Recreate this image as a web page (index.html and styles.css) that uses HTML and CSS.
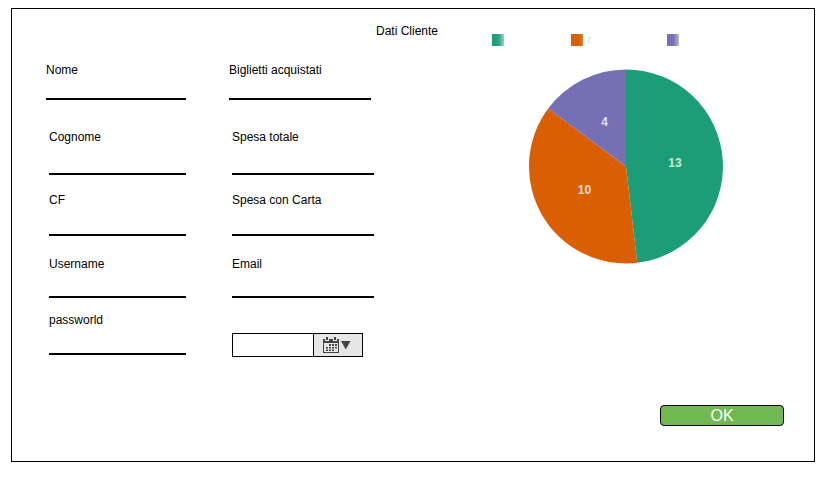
FILE: index.html
```html
<!DOCTYPE html>
<html lang="it">
<head>
<meta charset="utf-8">
<title>Dati Cliente</title>
<link rel="stylesheet" href="styles.css">
</head>
<body>
<main class="frame">
  <header class="header">
    <h1 class="title">Dati Cliente</h1>
    <div class="legend">
      <span class="swatch swatch-green"></span>
      <span class="swatch swatch-orange"></span>
      <span class="legend-text">r</span>
      <span class="swatch swatch-purple"></span>
    </div>
  </header>
  <div class="content">
    <section class="column">
      <div class="field field-first">Nome</div>
      <div class="field field-second">Cognome</div>
      <div class="field field-third">CF</div>
      <div class="field field-fourth">Username</div>
      <div class="field field-fifth">passworld</div>
    </section>
    <section class="column column-wide">
      <div class="field field-first">Biglietti acquistati</div>
      <div class="field field-second">Spesa totale</div>
      <div class="field field-third">Spesa con Carta</div>
      <div class="field field-fourth">Email</div>
      <div class="date">
        <div class="date-value"></div>
        <div class="date-button">
          <svg width="28" height="17" viewBox="0 0 28 17" fill="#444">
            <path fill-rule="evenodd" d="M0 2h2v2h3V2h5v2h3V2h3v14H0zM1 5.5v9.5h14V5.5z"/>
            <path d="M1 2h14v4H1z"/>
            <path fill="#e6e6e6" d="M2 0h4v4H2zM10 0h4v4h-4z"/>
            <path d="M3 0h2v3H3zM11 0h2v3h-2z"/>
            <path d="M6 7h2v2H6zM9 7h2v2H9zM12 7h2v2h-2zM3 10h2v1.500H3zM6 10h2v1.500H6zM9 10h2v1.500H9zM12 10h2v1.500h-2zM3 12.500h2V14H3zM6 12.500h2V14H6zM9 12.500h2V14H9z"/>
            <path d="M18 4h9.500l-4.750 8.500z"/>
          </svg>
        </div>
      </div>
    </section>
    <svg class="pie" width="194" height="195" viewBox="0 0 194 195">
      <path fill="#1b9e77" d="M97 97.400V.4A97 97 0 0 1 108.260 193.740z"/>
      <path fill="#d95f02" d="M97 97.400L108.260 193.740A97 97 0 0 1 19.200 39.470z"/>
      <path fill="#7570b3" d="M97 97.400L19.200 39.470A97 97 0 0 1 97 .4z"/>
      <g class="pie-labels">
        <text x="146" y="98">13</text>
        <text x="55.500" y="125">10</text>
        <text x="75.500" y="57">4</text>
      </g>
    </svg>
  </div>
  <footer class="footer"><button class="ok">OK</button></footer>
</main>
</body>
</html>
```
FILE: styles.css
```css
* { box-sizing: border-box; }
body {
  margin: 0;
  padding: 8px 0 0 11px;
  background: #fff;
  color: #000;
  font: 12px/14px "Liberation Sans", Arial, sans-serif;
}
.frame {
  width: 804px;
  height: 454px;
  border: 1px solid #000;
}
.header {
  display: flex;
  height: 54px;
  padding: 15px 0 0 364px;
}
.title {
  width: 116px;
  margin: 0;
  font-size: 12px;
  font-weight: normal;
}
.legend { display: flex; padding-top: 10px; }
.swatch { width: 12px; height: 12px; }
.swatch-green {
  margin-right: 67px;
  background: linear-gradient(90deg, #1fa07b 35%, #35a987 60%, #9bd3c2);
}
.swatch-orange { background: linear-gradient(90deg, #d95f02 65%, #e27a2b); }
.swatch-purple { background: linear-gradient(90deg, #7772b4 50%, #8c88c1 70%, #bdbbdc); }
.legend-text {
  width: 84px;
  padding-left: 4px;
  line-height: 13px;
  color: #dedeea;
}
.content {
  display: flex;
  height: 333px;
  padding-left: 34px;
}
.column { width: 140px; margin-right: 43px; }
.column-wide { width: 145px; margin-right: 155px; }
.field {
  margin-left: 3px;
  border-bottom: 2px solid #000;
}
.field-first { height: 37px; margin-left: 0; }
.column-wide .field-first { margin-right: 3px; }
.field-second { height: 45px; margin-top: 30px; }
.field-third { height: 43px; margin-top: 18px; }
.field-fourth { height: 41px; margin-top: 21px; }
.field-fifth { height: 42px; margin-top: 15px; }
.date {
  display: flex;
  width: 131px;
  height: 24px;
  margin: 35px 0 0 3px;
  border: 1px solid #000;
}
.date-value { width: 81px; border-right: 1px solid #000; }
.date-button {
  flex: 1;
  padding: 3px 0 0 9px;
  background: #e6e6e6;
}
.date-button svg { display: block; }
.pie { margin-top: 6px; }
.pie-labels {
  fill: #fff;
  fill-opacity: .8;
  font-size: 12px;
  font-weight: bold;
  text-anchor: middle;
}
.footer {
  display: flex;
  justify-content: flex-end;
  padding: 9px 30px 0 0;
}
.ok {
  width: 124px;
  height: 21px;
  padding: 1px 0 0;
  border: 1px solid #000;
  border-radius: 4px;
  background: #70ba52;
  color: #fff;
  font: 16px/18px "Liberation Sans", Arial, sans-serif;
}
```
